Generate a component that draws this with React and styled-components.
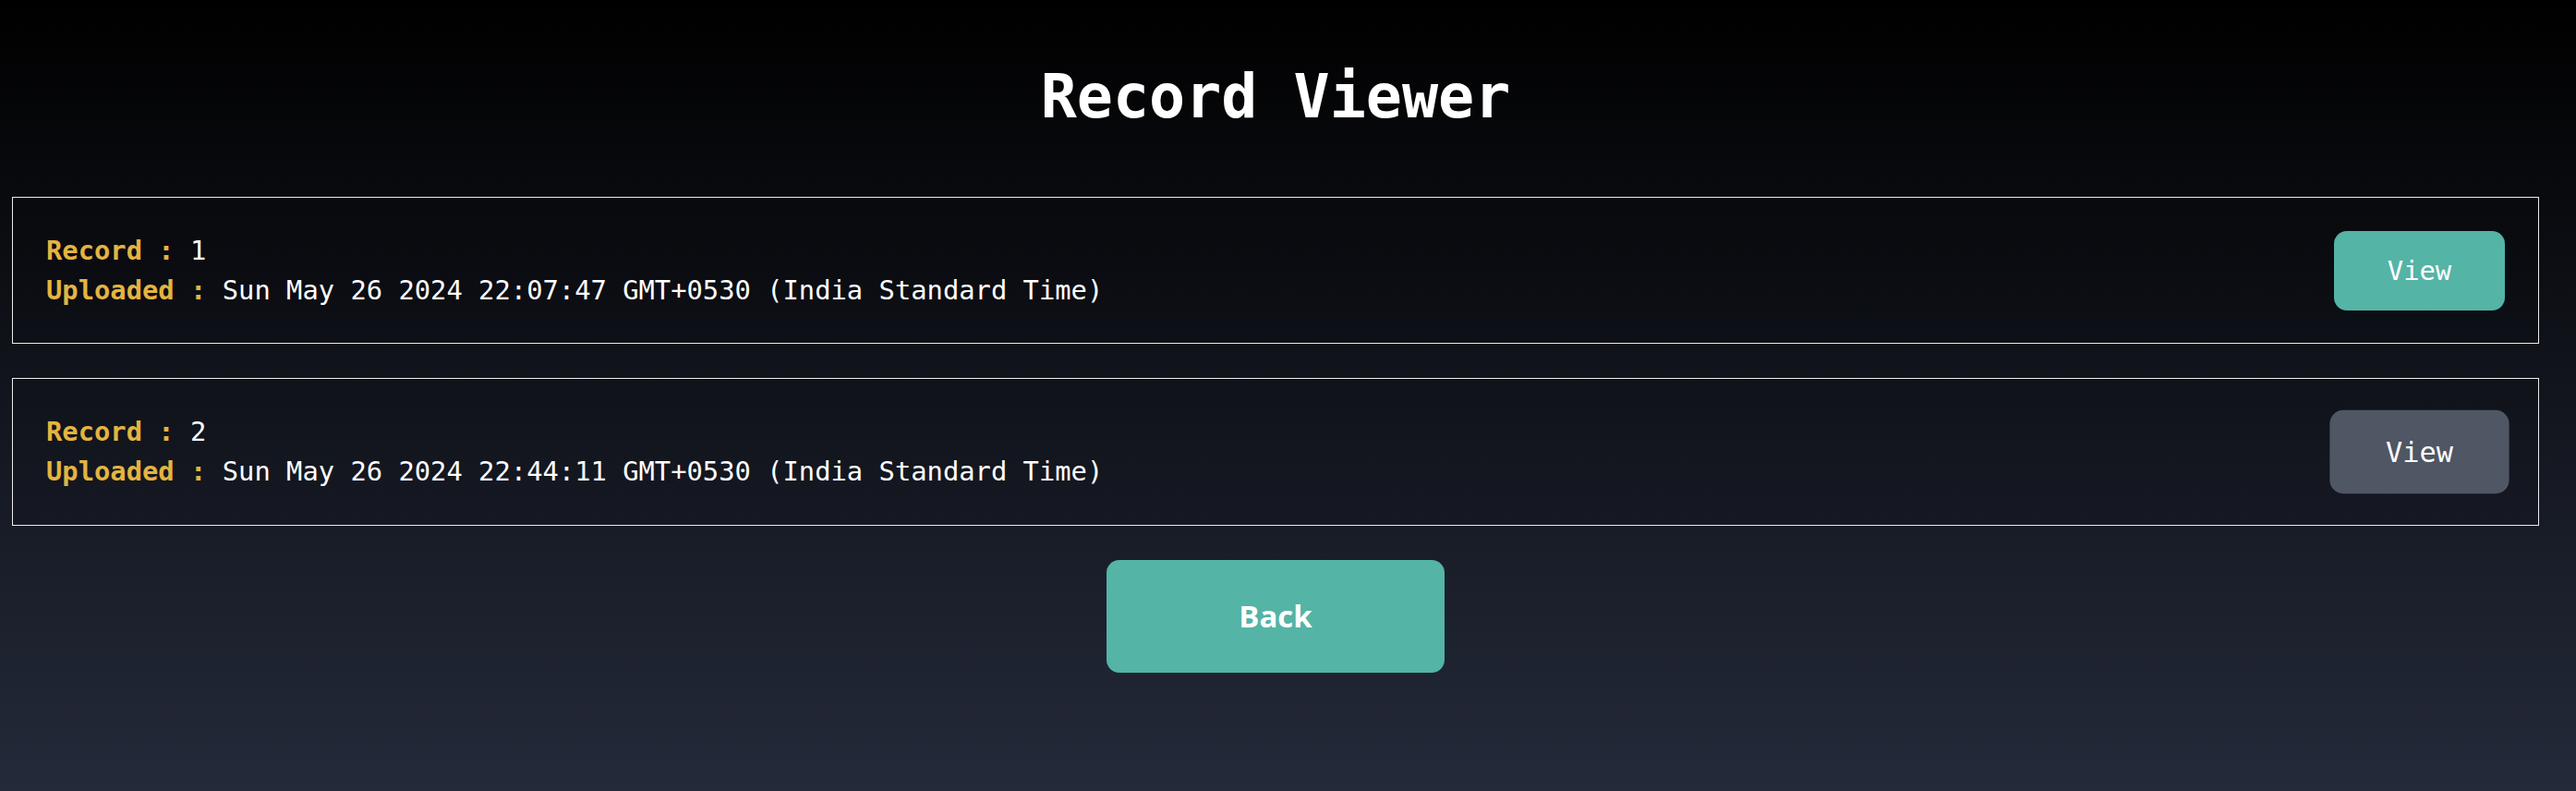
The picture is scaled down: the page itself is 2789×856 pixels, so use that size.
import styled, { createGlobalStyle } from "styled-components";

const records = [
  { id: 1, uploaded: "Sun May 26 2024 22:07:47 GMT+0530 (India Standard Time)" },
  { id: 2, uploaded: "Sun May 26 2024 22:44:11 GMT+0530 (India Standard Time)", hovered: true },
];

export default function App() {
  return (
    <>
      <GlobalStyle />
      <Page>
        <Container>
          <Title>Record Viewer</Title>

          <List>
            {records.map((record) => (
              <Card key={record.id}>
                <Info>
                  <Line>
                    <Label>Record :</Label> {record.id}
                  </Line>
                  <Line>
                    <Label>Uploaded :</Label> {record.uploaded}
                  </Line>
                </Info>
                <ViewButton $hovered={record.hovered}>View</ViewButton>
              </Card>
            ))}
          </List>

          <BackButton>Back</BackButton>
        </Container>
      </Page>
    </>
  );
}

const GlobalStyle = createGlobalStyle`
  html, body {
    margin: 0;
    height: 100%;
  }

  body {
    background: linear-gradient(to bottom, #000000, #242a3a);
    color: #ffffff;
    font-family: "DejaVu Sans Mono", "Liberation Mono", monospace;
  }
`;

const Page = styled.div`
  min-height: 100vh;
  box-sizing: border-box;
  padding-left: 13px;
`;

const Container = styled.div`
  width: 2736px;
  display: flex;
  flex-direction: column;
  align-items: center;
`;

const Title = styled.h1`
  margin: 72px 0 76px;
  font-size: 65px;
  line-height: 1;
  font-weight: 700;
`;

const List = styled.div`
  width: 100%;
  display: flex;
  flex-direction: column;
  gap: 37px;
  margin-bottom: 37px;
`;

const Card = styled.div`
  display: flex;
  align-items: center;
  justify-content: space-between;
  padding: 35.5px 36px 35.5px 36px;
  border: 1px solid #ececec;
  background: rgba(0, 0, 0, 0.08);
`;

const Info = styled.div`
  font-size: 28.8px;
  line-height: 1.5;
`;

const Line = styled.div`
  white-space: pre;
`;

const Label = styled.span`
  color: #e4b440;
  font-weight: 700;
`;

const ViewButton = styled.button`
  width: 185px;
  height: 86px;
  border: none;
  border-radius: 14px;
  background: ${(p) => (p.$hovered ? "#4f5664" : "#54b4a6")};
  color: #ffffff;
  font-family: "DejaVu Sans Mono", monospace;
  font-size: 28.8px;
  cursor: pointer;
  transform: ${(p) => (p.$hovered ? "scale(1.05)" : "none")};
  transition: transform 0.2s, background 0.2s;
`;

const BackButton = styled.button`
  width: 366px;
  height: 122px;
  border: none;
  border-radius: 14px;
  background: #54b4a6;
  color: #ffffff;
  font-family: "Open Sans", "Noto Sans", sans-serif;
  font-weight: 700;
  font-size: 33px;
  cursor: pointer;
`;
